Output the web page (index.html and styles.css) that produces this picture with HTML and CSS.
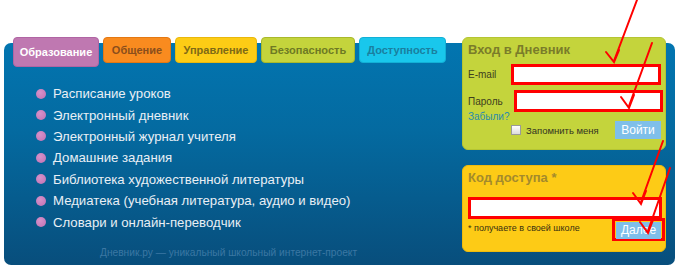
FILE: index.html
```html
<!DOCTYPE html>
<html lang="ru">
<head>
<meta charset="utf-8">
<title>Дневник.ру</title>
<link rel="stylesheet" href="styles.css">
</head>
<body>
<div class="page">
  <div class="panel">
    <div class="left">
      <div class="tabs">
        <div class="tab tab-edu">Образование</div>
        <div class="tab tab-com">Общение</div>
        <div class="tab tab-man">Управление</div>
        <div class="tab tab-sec">Безопасность</div>
        <div class="tab tab-acc">Доступность</div>
      </div>
      <ul class="features">
        <li>Расписание уроков</li>
        <li>Электронный дневник</li>
        <li>Электронный журнал учителя</li>
        <li>Домашние задания</li>
        <li>Библиотека художественной литературы</li>
        <li>Медиатека (учебная литература, аудио и видео)</li>
        <li>Словари и онлайн-переводчик</li>
      </ul>
      <div class="slogan">Дневник.ру — уникальный школьный интернет-проект</div>
    </div>
    <div class="right">
      <div class="box login">
        <div class="box-title">Вход в Дневник</div>
        <div class="row row-email">
          <span class="label">E-mail</span>
          <span class="field"></span>
        </div>
        <div class="row row-pass">
          <span class="label">Пароль</span>
          <span class="field"></span>
        </div>
        <div class="forgot">Забыли?</div>
        <div class="row row-remember">
          <span class="check"></span>
          <span class="remember-text">Запомнить меня</span>
          <span class="btn btn-login">Войти</span>
        </div>
      </div>
      <div class="box code">
        <div class="box-title code-title">Код доступа *</div>
        <div class="field code-field"></div>
        <div class="row row-next">
          <span class="hint">* получаете в своей школе</span>
          <span class="next-wrap"><span class="btn btn-next">Далее</span></span>
        </div>
      </div>
    </div>
  </div>
  <svg class="arrows" width="680" height="267" viewBox="0 0 680 267">
    <g stroke="#ff0000" stroke-width="2" fill="none" stroke-linecap="round">
      <path d="M637 0 L614 61"/>
      <path d="M606 52 L614 62 L619 50"/>
      <path d="M652 43 L629 106"/>
      <path d="M621 97 L629 108 L634 95"/>
      <path d="M663 141 L641 202"/>
      <path d="M633 193 L641 204 L646 191"/>
      <path d="M670 168 L648 231"/>
      <path d="M640 222 L648 233 L653 220"/>
    </g>
  </svg>
</div>
</body>
</html>
```

FILE: styles.css
```css
* { box-sizing: border-box; }
html, body { margin: 0; padding: 0; background: #ffffff; }
body { font-family: "Liberation Sans", Arial, sans-serif; }

.page {
  position: relative;
  width: 680px;
  height: 267px;
  padding-top: 43px;
  padding-left: 4px;
}

.panel {
  display: flex;
  width: 671px;
  height: 222px;
  border-radius: 7px;
  background: linear-gradient(to bottom, #0275b0 0%, #046aa0 40%, #084e7c 100%);
}

.left {
  flex: 1;
  padding-left: 9px;
  margin-top: -6px;
}

.tabs {
  display: flex;
  align-items: flex-start;
  gap: 4px;
}
.tab {
  height: 26px;
  line-height: 24px;
  border-radius: 4px;
  border: 1px solid;
  text-align: center;
  font-weight: bold;
  font-size: 11px;
}
.tab-edu { width: 86px; height: 30px; line-height: 28px; background: #bf78b1; border-color: #b065a3; color: #ffffff; }
.tab-com { width: 68px; background: #f98b1f; border-color: #e47812; color: #8a4e1c; }
.tab-man { width: 82px; background: #fdcc15; border-color: #e9b80c; color: #7f6a16; }
.tab-sec { width: 94px; background: #c4d43c; border-color: #a9b92a; color: #6e7a24; }
.tab-acc { width: 87px; background: #19c7ec; border-color: #12b0d6; color: #1a7f9f; }

.features {
  list-style: none;
  margin: 16px 0 0 0;
  padding: 0;
}
.features li {
  display: flex;
  align-items: center;
  height: 21.4px;
  padding-left: 23px;
  font-size: 13.2px;
  color: #e9eff5;
}
.features li::before {
  content: "";
  width: 10px;
  height: 10px;
  margin-right: 7px;
  border-radius: 50%;
  background: radial-gradient(circle at 40% 35%, #d792ca, #c070b2);
}

.slogan {
  margin-top: 13px;
  padding-left: 87px;
  font-size: 10.2px;
  line-height: 14px;
  color: #3b77a3;
}

.right {
  width: 204px;
  margin-right: 9px;
  margin-top: -6px;
  display: flex;
  flex-direction: column;
  gap: 15px;
}

.box {
  border-radius: 6px;
  padding: 5px 4px 0 5px;
}
.login {
  height: 113px;
  background: #c4d43c;
  border: 1px solid #b5c532;
  padding-top: 4px;
}
.code {
  height: 87px;
  background: #fdcb16;
  border: 1px solid #efbb0c;
  padding-top: 4px;
}
.box-title {
  font-weight: bold;
  font-size: 13px;
  line-height: 15px;
  color: #7a7c2a;
  white-space: nowrap;
}
.code-title { color: #a48a2c; }

.row { display: flex; align-items: center; }
.label {
  font-size: 10px;
  color: #3e3e1e;
}
.field {
  display: block;
  background: #ffffff;
  border: 3px solid #ff0000;
}
.row-email { margin-top: 7px; height: 21px; }
.row-email .label { width: 43px; }
.row-email .field { width: 151px; height: 21px; }
.row-pass { margin-top: 5px; height: 22px; }
.row-pass .label { width: 46px; }
.row-pass .field { width: 150px; height: 22px; margin-right: -2px; }

.forgot {
  font-size: 10px;
  line-height: 10px;
  color: #2a8cad;
}

.row-remember { margin-top: -1px; height: 18px; }
.check {
  width: 10px;
  height: 10px;
  margin-left: 43px;
  margin-right: 5px;
  background: linear-gradient(#ffffff, #dcdcdc);
  border: 1px solid #9a9a9a;
}
.remember-text {
  font-size: 9.5px;
  color: #333322;
}
.btn {
  display: block;
  background: #7fbfea;
  color: #ffffff;
  font-size: 12px;
  text-align: center;
}
.btn-login {
  margin-left: auto;
  margin-right: 0;
  width: 46px;
  height: 18px;
  line-height: 18px;
}

.code-field {
  margin-top: 12px;
  width: 194px;
  height: 22px;
}
.row-next {
  margin-top: -1px;
  height: 23px;
}
.hint {
  font-size: 9px;
  color: #3a3010;
  margin-top: -4px;
}
.next-wrap {
  margin-left: auto;
  margin-right: -4px;
  width: 53px;
  height: 23px;
  border: 3px solid #ff0000;
  padding: 1px;
}
.btn-next {
  height: 17px;
  line-height: 17px;
  font-size: 12px;
}

.arrows {
  position: absolute;
  left: 0;
  top: 0;
  pointer-events: none;
}
```
